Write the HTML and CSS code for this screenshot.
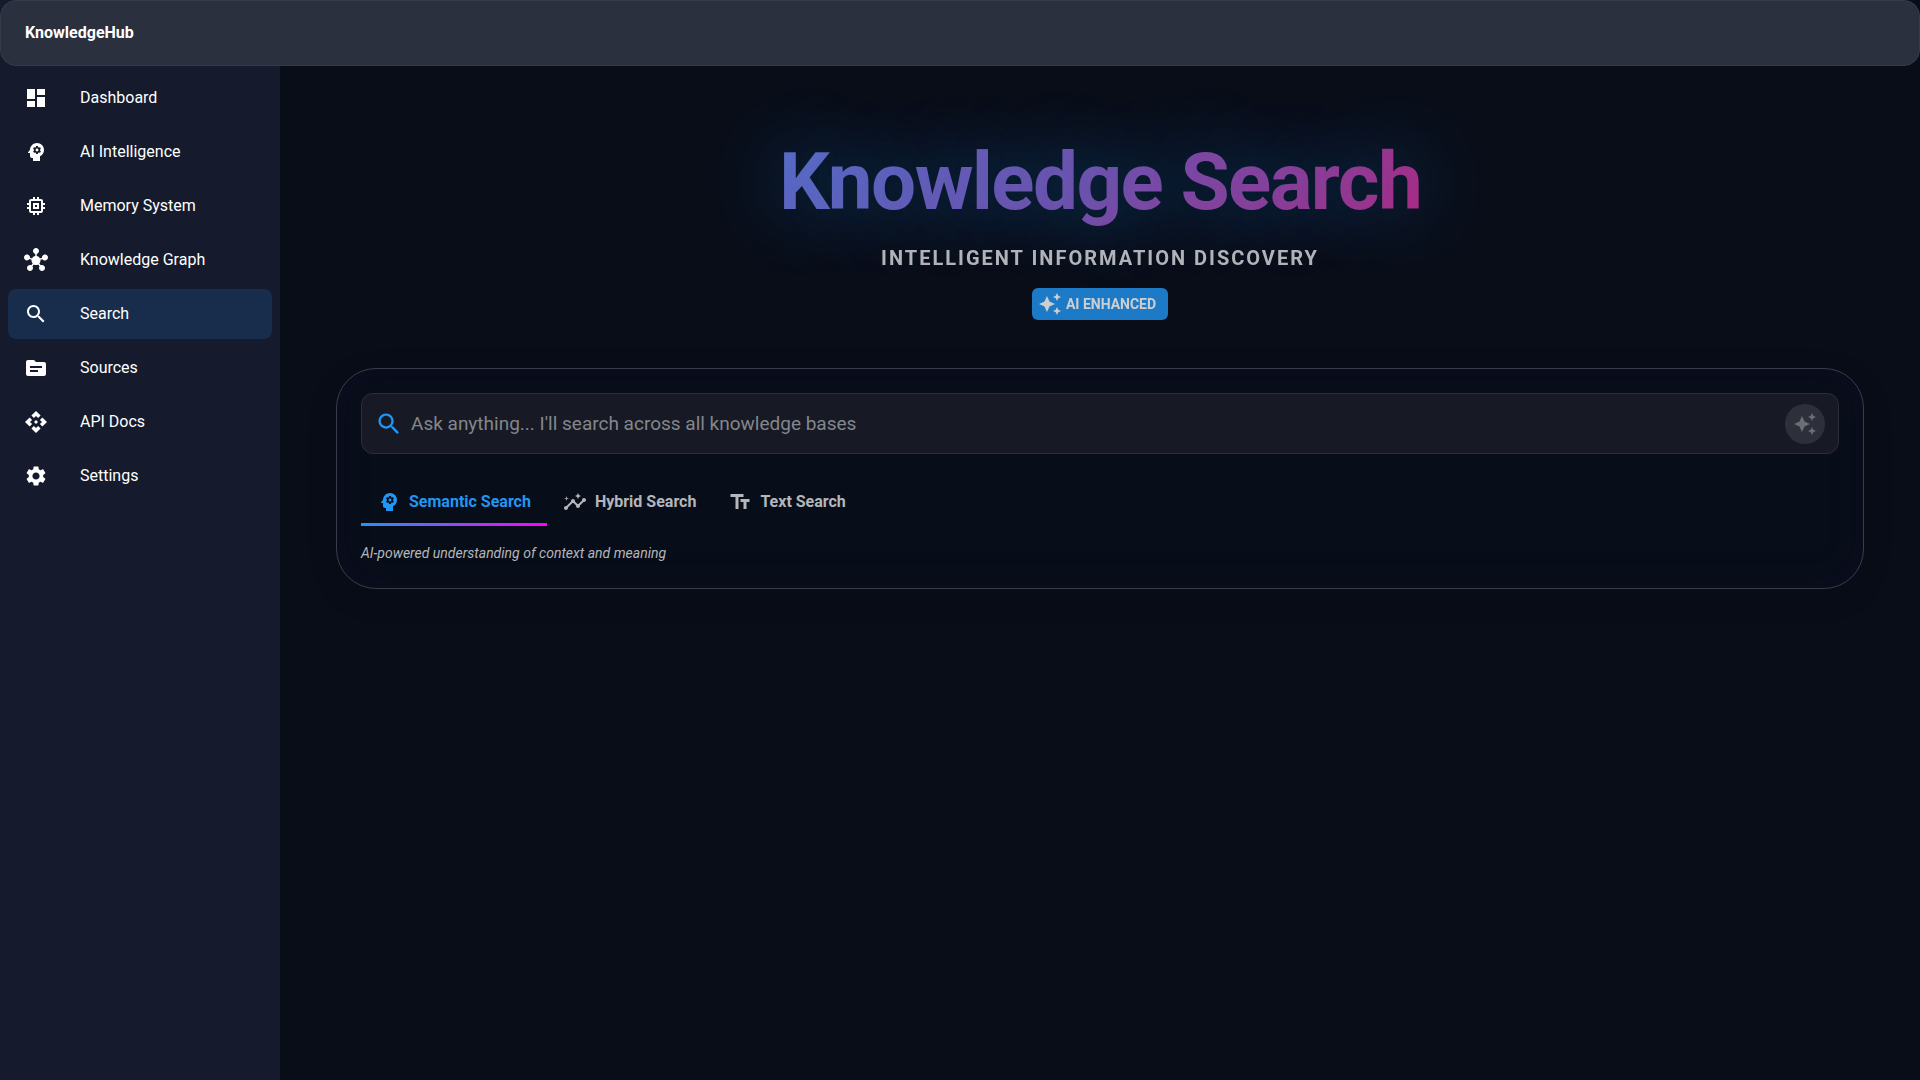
FILE: index.html
```html
<!DOCTYPE html>
<html lang="en">
<head>
<meta charset="utf-8">
<meta name="viewport" content="width=device-width, initial-scale=1">
<title>KnowledgeHub</title>
<link rel="stylesheet" href="styles.css">
</head>
<body>
<svg class="sprite" aria-hidden="true">
  <symbol id="i-dashboard" viewBox="0 0 24 24"><path d="M3 13h8V3H3v10zm0 8h8v-6H3v6zm10 0h8V11h-8v10zm0-18v6h8V3h-8z"/></symbol>
  <symbol id="i-mind" viewBox="0 0 24 24"><path d="M13 8.57c-.79 0-1.43.64-1.43 1.43s.64 1.43 1.43 1.43 1.43-.64 1.43-1.43-.64-1.43-1.43-1.43z"/><path d="M13 3C9.25 3 6.2 5.94 6.02 9.64L4.1 12.2c-.25.33-.01.8.4.8H6v3c0 1.1.9 2 2 2h1v3h7v-4.68c2.36-1.12 4-3.53 4-6.32 0-3.87-3.13-7-7-7zm3 7c0 .13-.01.26-.02.39l.83.66c.08.06.1.16.05.25l-.8 1.39c-.05.09-.16.12-.24.09l-.99-.4c-.21.16-.43.29-.67.39L14 13.83c-.01.1-.1.17-.2.17h-1.6c-.1 0-.18-.07-.2-.17l-.15-1.06c-.25-.1-.47-.23-.68-.39l-.99.4c-.09.03-.2 0-.25-.09l-.8-1.39c-.05-.08-.03-.19.05-.25l.84-.66c-.01-.13-.02-.26-.02-.39s.02-.27.04-.39l-.85-.66c-.08-.06-.1-.16-.05-.26l.8-1.38c.05-.09.15-.12.24-.09l1 .4c.2-.15.43-.29.67-.39L12 6.17c.02-.1.1-.17.2-.17h1.6c.1 0 .18.07.2.17l.15 1.06c.24.1.46.23.67.39l1-.4c.09-.03.2 0 .24.09l.8 1.38c.05.09.03.2-.05.26l-.85.66c.03.12.04.25.04.39z"/></symbol>
  <symbol id="i-memory" viewBox="0 0 24 24"><path d="M15 9H9v6h6V9zm-2 4h-2v-2h2v2zm8-2V9h-2V7c0-1.1-.9-2-2-2h-2V3h-2v2h-2V3H9v2H7c-1.1 0-2 .9-2 2v2H3v2h2v2H3v2h2v2c0 1.1.9 2 2 2h2v2h2v-2h2v2h2v-2h2c1.1 0 2-.9 2-2v-2h2v-2h-2v-2h2zm-4 6H7V7h10v10z"/></symbol>
  <symbol id="i-hub" viewBox="0 0 24 24"><path d="M8.4 18.2c.38.5.6 1.12.6 1.8 0 1.66-1.34 3-3 3s-3-1.34-3-3 1.34-3 3-3c.44 0 .85.09 1.23.26l1.41-1.77c-.92-1.03-1.29-2.39-1.09-3.69l-2.03-.68c-.54.83-1.46 1.38-2.52 1.38-1.66 0-3-1.34-3-3s1.34-3 3-3 3 1.34 3 3c0 .07 0 .14-.01.21l2.03.68c.64-1.21 1.82-2.09 3.22-2.32V5.91C9.96 5.57 9 4.4 9 3c0-1.66 1.34-3 3-3s3 1.34 3 3c0 1.4-.96 2.57-2.25 2.91v2.16c1.4.23 2.58 1.11 3.22 2.32L18 9.71V9.5c0-1.66 1.34-3 3-3s3 1.34 3 3-1.34 3-3 3c-1.06 0-1.98-.55-2.52-1.37l-2.03.68c.2 1.29-.16 2.65-1.09 3.69l1.41 1.77c.38-.18.79-.27 1.23-.27 1.66 0 3 1.34 3 3s-1.34 3-3 3-3-1.34-3-3c0-.68.22-1.3.6-1.8l-1.41-1.77c-1.35.75-3.01.76-4.37 0L8.4 18.2z"/></symbol>
  <symbol id="i-search" viewBox="0 0 24 24"><path d="M15.5 14h-.79l-.28-.27C15.41 12.59 16 11.11 16 9.5 16 5.91 13.09 3 9.5 3S3 5.91 3 9.5 5.91 16 9.5 16c1.61 0 3.09-.59 4.23-1.57l.27.28v.79l5 4.99L20.49 19l-4.99-5zm-6 0C7.01 14 5 11.99 5 9.5S7.01 5 9.5 5 14 7.01 14 9.5 11.99 14 9.5 14z"/></symbol>
  <symbol id="i-source" viewBox="0 0 24 24"><path d="M20 6h-8l-2-2H4c-1.1 0-1.99.9-1.99 2L2 18c0 1.1.9 2 2 2h16c1.1 0 2-.9 2-2V8c0-1.1-.9-2-2-2zm-6 10H6v-2h8v2zm4-4H6v-2h12v2z"/></symbol>
  <symbol id="i-api" viewBox="0 0 24 24"><path d="M14 12l-2 2-2-2 2-2 2 2zm-2-6l2.12 2.12 2.5-2.5L12 1 7.38 5.62l2.5 2.5L12 6zm-6 6l2.12-2.12-2.5-2.5L1 12l4.62 4.62 2.5-2.5L6 12zm12 0l-2.12 2.12 2.5 2.5L23 12l-4.62-4.62-2.5 2.5L18 12zm-6 6l-2.12-2.12-2.5 2.5L12 23l4.62-4.62-2.5-2.5L12 18z"/></symbol>
  <symbol id="i-settings" viewBox="0 0 24 24"><path d="M19.14 12.94c.04-.3.06-.61.06-.94 0-.32-.02-.64-.07-.94l2.03-1.58c.18-.14.23-.41.12-.61l-1.92-3.32c-.12-.22-.37-.29-.59-.22l-2.39.96c-.5-.38-1.03-.7-1.62-.94l-.36-2.54c-.04-.24-.24-.41-.48-.41h-3.84c-.24 0-.43.17-.47.41l-.36 2.54c-.59.24-1.13.57-1.62.94l-2.39-.96c-.22-.08-.47 0-.59.22L2.74 8.87c-.12.21-.08.47.12.61l2.03 1.58c-.05.3-.09.63-.09.94s.02.64.07.94l-2.03 1.58c-.18.14-.23.41-.12.61l1.92 3.32c.12.22.37.29.59.22l2.39-.96c.5.38 1.03.7 1.62.94l.36 2.54c.05.24.24.41.48.41h3.84c.24 0 .44-.17.47-.41l.36-2.54c.59-.24 1.13-.56 1.62-.94l2.39.96c.22.08.47 0 .59-.22l1.92-3.32c.12-.22.07-.47-.12-.61l-2.01-1.58zM12 15.6c-1.98 0-3.6-1.62-3.6-3.6s1.62-3.6 3.6-3.6 3.6 1.62 3.6 3.6-1.62 3.6-3.6 3.6z"/></symbol>
  <symbol id="i-sparkle" viewBox="0 0 24 24"><path d="M19 9l1.25-2.75L23 5l-2.75-1.25L19 1l-1.25 2.75L15 5l2.75 1.25L19 9zm-7.5.5L9 4 6.5 9.5 1 12l5.5 2.5L9 20l2.5-5.5L17 12l-5.5-2.5zM19 15l-1.25 2.75L15 19l2.75 1.25L19 23l1.25-2.75L23 19l-2.75-1.25L19 15z"/></symbol>
  <symbol id="i-insights" viewBox="0 0 24 24"><path d="M21 8c-1.45 0-2.26 1.44-1.93 2.51l-3.55 3.56c-.3-.09-.74-.09-1.04 0l-2.55-2.55C12.27 10.45 11.46 9 10 9c-1.45 0-2.27 1.44-1.93 2.52l-4.56 4.55C2.44 15.74 1 16.55 1 18c0 1.1.9 2 2 2 1.45 0 2.26-1.44 1.93-2.51l4.55-4.56c.3.09.74.09 1.04 0l2.55 2.55C12.73 16.55 13.54 18 15 18c1.45 0 2.27-1.44 1.93-2.52l3.56-3.55c1.07.33 2.51-.48 2.51-1.93 0-1.1-.9-2-2-2z"/><path d="M15 9l.94-2.07L18 6l-2.06-.93L15 3l-.92 2.07L12 6l2.08.93zM3.5 11L4 9l2-.5L4 8l-.5-2L3 8l-2 .5L3 9z"/></symbol>
  <symbol id="i-text" viewBox="0 0 24 24"><path d="M2.5 4v3h5v12h3V7h5V4h-13zm19 5h-9v3h3v7h3v-7h3V9z"/></symbol>
</svg>

<header class="topbar"><span class="brand">KnowledgeHub</span></header>

<div class="shell">
  <nav class="sidebar" aria-label="Main">
    <a class="nav-item" href="#dashboard"><svg class="icon"><use href="#i-dashboard"/></svg>Dashboard</a>
    <a class="nav-item" href="#ai"><svg class="icon"><use href="#i-mind"/></svg>AI Intelligence</a>
    <a class="nav-item" href="#memory"><svg class="icon"><use href="#i-memory"/></svg>Memory System</a>
    <a class="nav-item" href="#graph"><svg class="icon"><use href="#i-hub"/></svg>Knowledge Graph</a>
    <a class="nav-item nav-item-active" href="#search" aria-current="page"><svg class="icon"><use href="#i-search"/></svg>Search</a>
    <a class="nav-item" href="#sources"><svg class="icon"><use href="#i-source"/></svg>Sources</a>
    <a class="nav-item" href="#api"><svg class="icon"><use href="#i-api"/></svg>API Docs</a>
    <a class="nav-item" href="#settings"><svg class="icon"><use href="#i-settings"/></svg>Settings</a>
  </nav>

  <main class="content">
    <section class="hero">
      <h1 class="title">Knowledge Search</h1>
      <p class="subtitle">INTELLIGENT INFORMATION DISCOVERY</p>
      <span class="badge"><svg class="icon"><use href="#i-sparkle"/></svg>AI ENHANCED</span>
    </section>

    <section class="card">
      <form class="searchbox" role="search">
        <svg class="icon searchbox-icon"><use href="#i-search"/></svg>
        <input class="searchbox-input" type="text" aria-label="Search" placeholder="Ask anything... I'll search across all knowledge bases">
        <button class="searchbox-button" type="button" aria-label="Run AI search" disabled><svg class="icon"><use href="#i-sparkle"/></svg></button>
      </form>
      <div class="tabs" role="tablist">
        <button class="tab tab-active" type="button" role="tab" aria-selected="true"><svg class="icon"><use href="#i-mind"/></svg>Semantic Search</button>
        <button class="tab" type="button" role="tab" aria-selected="false"><svg class="icon"><use href="#i-insights"/></svg>Hybrid Search</button>
        <button class="tab" type="button" role="tab" aria-selected="false"><svg class="icon"><use href="#i-text"/></svg>Text Search</button>
      </div>
      <p class="hint">AI-powered understanding of context and meaning</p>
    </section>
  </main>
</div>
</body>
</html>
```
FILE: styles.css
```css
* {
  box-sizing: border-box;
}

body {
  margin: 0;
  min-height: 100vh;
  display: flex;
  flex-direction: column;
  background: linear-gradient(to right, #151b2d 280px, #090d18 280px);
  color: #fff;
  font-family: Roboto, "Liberation Sans", sans-serif;
  font-size: 16px;
  line-height: 24px;
}

.sprite {
  display: none;
}

.icon {
  width: 24px;
  height: 24px;
  flex: none;
  fill: currentColor;
}

.topbar {
  height: 66px;
  padding: 20px 24px;
  border: 1px solid #343b4b;
  border-radius: 16px;
  background: #2b303f;
}

.brand {
  font-weight: 700;
}

.shell {
  flex: 1;
  display: flex;
}

.sidebar {
  width: 280px;
  flex: none;
  display: flex;
  flex-direction: column;
  gap: 4px;
  padding: 7px 8px;
}

.nav-item {
  display: flex;
  align-items: center;
  gap: 32px;
  height: 50px;
  padding: 0 16px;
  border-radius: 8px;
  color: #fff;
  text-decoration: none;
}

.nav-item-active {
  background: #182c4b;
}

.content {
  flex: 1;
  min-width: 0;
  padding: 60px 56px;
}

.hero {
  display: flex;
  flex-direction: column;
  align-items: center;
  padding-bottom: 48px;
  opacity: 0.8;
}

.title {
  margin: 0 0 4px;
  font-size: 80px;
  line-height: 112px;
  font-weight: 700;
  letter-spacing: -0.02em;
  background: linear-gradient(135deg, #7084f4 0%, #9c5ccc 50%, #e42a98 100%);
  -webkit-background-clip: text;
  background-clip: text;
  color: transparent;
  text-shadow: 0 0 80px rgba(33, 150, 243, 0.6);
}

.subtitle {
  margin: 0 0 14px;
  font-size: 20px;
  line-height: 32px;
  font-weight: 700;
  letter-spacing: 2px;
  color: #dcdde0;
}

.badge {
  display: flex;
  align-items: center;
  gap: 4px;
  height: 32px;
  padding: 0 12px 0 6px;
  border-radius: 6px;
  background: #2196f3;
  font-size: 14px;
  font-weight: 700;
}

.card {
  padding: 24px;
  border: 1px solid #3a3d47;
  border-radius: 40px;
  background: #080e19;
  box-shadow: 0 8px 32px rgba(0, 0, 0, 0.1), inset 0 0 32px rgba(20, 10, 50, 0.3);
}

.searchbox {
  display: flex;
  align-items: center;
  gap: 8px;
  height: 61px;
  padding: 0 13px;
  border: 1px solid #2b2e38;
  border-radius: 12px;
  background: #171a25;
}

.searchbox-icon {
  width: 28px;
  height: 28px;
  color: #2196f3;
}

.searchbox-input {
  flex: 1;
  min-width: 0;
  padding: 0;
  border: 0;
  outline: 0;
  background: transparent;
  color: #fff;
  font: inherit;
  font-size: 19px;
}

.searchbox-input::placeholder {
  color: #84868c;
  opacity: 1;
}

.searchbox-button {
  display: grid;
  place-items: center;
  width: 40px;
  height: 40px;
  padding: 0;
  border: 0;
  border-radius: 50%;
  background: #2d303a;
  color: #6c6e76;
}

.tabs {
  display: flex;
  margin-top: 24px;
}

.tab {
  display: flex;
  align-items: center;
  gap: 8px;
  height: 48px;
  padding: 0 16px;
  border: 0;
  background: none;
  color: #b5b6ba;
  font: inherit;
  font-weight: 700;
}

.tab-active {
  background: linear-gradient(90deg, #2196f3, #ff00ff) bottom / 100% 3px no-repeat;
  color: #2196f3;
}

.hint {
  margin: 16px 0 0;
  color: #b5b6ba;
  font-size: 14px;
  line-height: 22px;
  font-style: italic;
}
```
